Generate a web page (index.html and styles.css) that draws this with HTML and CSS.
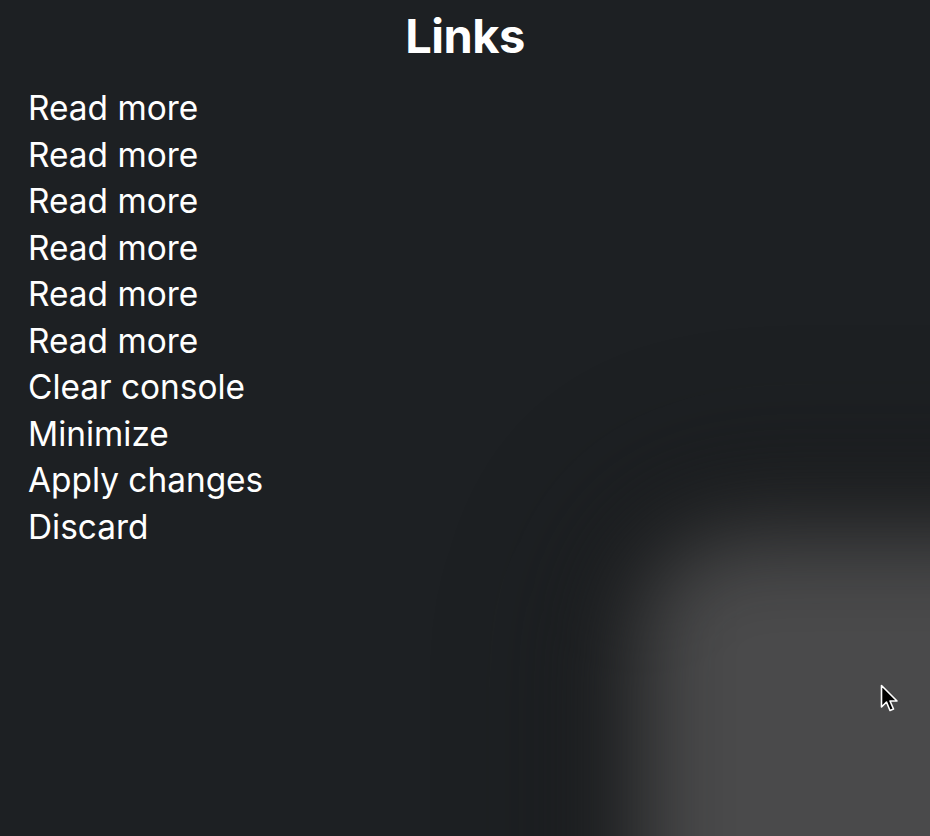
FILE: index.html
```html
<!DOCTYPE html>
<html lang="en">
<head>
    <meta charset="UTF-8">
    <meta name="viewport" content="width=device-width, initial-scale=1.0">
    <title>Links</title>
    <link rel="stylesheet" href="styles.css">
</head>
<body>
    <div class="page">
        <h1 class="title">Links</h1>
        <ul class="link-list">
            <li><a href="#">Read more</a></li>
            <li><a href="#">Read more</a></li>
            <li><a href="#">Read more</a></li>
            <li><a href="#">Read more</a></li>
            <li><a href="#">Read more</a></li>
            <li><a href="#">Read more</a></li>
            <li><a href="#">Clear console</a></li>
            <li><a href="#">Minimize</a></li>
            <li><a href="#">Apply changes</a></li>
            <li><a href="#">Discard</a></li>
        </ul>
    </div>

    <!-- blurred window peeking in from the corner -->
    <div class="backdrop">
        <div class="glow"></div>
    </div>

    <svg class="cursor" width="20" height="30" viewBox="0 0 20 30">
        <path d="M1.5 1.5 L1.5 23 L6.5 18 L10 26.5 L13.5 25 L10 17 L17 17 Z" fill="#000" stroke="#fff" stroke-width="1.6" stroke-linejoin="round"/>
    </svg>
</body>
</html>
```

FILE: styles.css
```css
:root {
    --bg-color: #1d2023;
    --text-color: #ffffff;
}

html, body {
    height: 100%;
}

body {
    margin: 0;
    background-color: var(--bg-color);
    color: var(--text-color);
    font-family: Inter, 'Noto Sans', sans-serif;
    overflow: hidden;
    position: relative;
}

.page {
    padding: 0 28px;
}

.title {
    font-size: 47px;
    font-weight: 700;
    text-align: center;
    margin: 0;
    padding-top: 6px;
    line-height: 60px;
    letter-spacing: -0.5px;
}

.link-list {
    list-style: none;
    margin: 0;
    padding: 19px 0 0;
}

.link-list li {
    font-size: 33.4px;
    line-height: 46.5px;
}

.link-list a {
    color: var(--text-color);
    text-decoration: none;
}

.backdrop {
    position: absolute;
    top: 0;
    left: 0;
    right: 0;
    bottom: 0;
    overflow: hidden;
    pointer-events: none;
}

.glow {
    position: absolute;
    left: 640px;
    top: 535px;
    width: 500px;
    height: 500px;
    border-radius: 100px;
    background-color: #4a4a4b;
    filter: blur(45px);
    box-shadow: 0 0 90px 50px rgba(22, 22, 22, 0.7);
}

.cursor {
    position: absolute;
    left: 880px;
    top: 684px;
}
```
